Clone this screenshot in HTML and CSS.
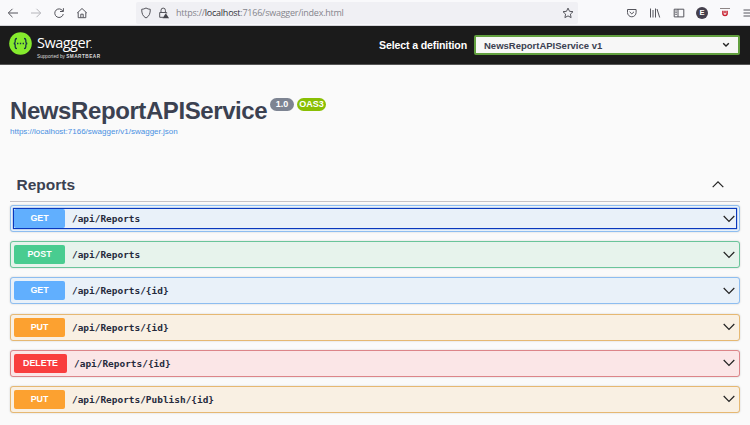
FILE: index.html
```html
<!DOCTYPE html>
<html lang="en">
<head>
<meta charset="utf-8">
<title>Swagger UI</title>
<link rel="stylesheet" href="styles.css">
</head>
<body>
<header class="browser">
  <nav class="nav">
    <svg width="12" height="12" viewBox="0 0 12 12"><path d="M11 6H1.500M5.500 1.800 1.300 6l4.200 4.200"/></svg>
    <svg class="faded" width="12" height="12" viewBox="0 0 12 12"><path d="M1 6h9.500M6.500 1.800 10.700 6l-4.200 4.200"/></svg>
    <svg width="12" height="12" viewBox="0 0 12 12"><path d="M9.900 4.200A4.300 4.300 0 1 0 10.300 7M10.400 1.200v3.300H7"/></svg>
    <svg width="12" height="12" viewBox="0 0 12 12"><path d="M1.200 6 6 1.500 10.800 6M2.200 5.300v5.400h7.600V5.300M4.800 10.500V7.200h2.400v3.300"/></svg>
  </nav>
  <div class="address">
    <svg width="12" height="12" viewBox="0 0 12 12"><path d="M6 1c1.400.9 2.800 1.200 4.300 1.300 0 4-.9 6.900-4.300 8.700C2.600 9.200 1.700 6.300 1.700 2.300 3.200 2.200 4.600 1.900 6 1z"/></svg>
    <svg class="lock" width="12" height="12" viewBox="0 0 12 12"><path d="M5 10.300H1.700V5.500h7v1M3 5.500V3.300a2.200 2.200 0 0 1 4.400 0v2.200"/><path class="solid" d="m7.800 6.200 3.300 5H4.500z"/></svg>
    <span class="url">https://<b>localhost</b>:7166/swagger/index.html</span>
    <svg class="star" width="12" height="12" viewBox="0 0 12 12"><path d="m6 1.100 1.500 3.200 3.500.4-2.600 2.400.7 3.500L6 8.900l-3.100 1.700.7-3.500L1 4.700l3.500-.4z"/></svg>
  </div>
  <div class="tools">
    <svg width="12" height="12" viewBox="0 0 12 12"><path d="M1.500 2.500h8.600v3a4.300 4.300 0 0 1-8.600 0zM3.600 4.800l2.200 2.100L8 4.800"/></svg>
    <svg width="12" height="12" viewBox="0 0 12 12"><path d="M1.500 1.500v9M4 3v7.500M6.500 1.500v9M8 2l2.700 8.500"/></svg>
    <svg width="12" height="12" viewBox="0 0 12 12"><path d="M1.200 2.200h9.600v7.700H1.200zM5 2.200v7.700M2.300 4h1.500M2.300 5.700h1.500M2.300 7.400h1.500"/></svg>
    <span class="avatar">E</span>
    <svg class="ublock" width="12" height="12" viewBox="0 0 12 12"><path class="cap" d="M1 1.500h10"/><path d="M3.900 3.700v3.500Q4.100 8.500 6 8.500t2.100-1.300V3.700M6 3.700v2.600"/></svg>
    <svg width="12" height="12" viewBox="0 0 12 12"><path d="M1.500 3h10M1.500 6h10M1.500 9h10"/></svg>
  </div>
</header>

<div class="topbar">
  <div class="brand">
    <svg class="mark" width="23" height="23" viewBox="0 0 23 23"><circle cx="11.500" cy="11.500" r="11.300"/><path d="M8 6.500c-1.500 0-1.800.5-1.800 1.600v1.500c0 1.200-.4 1.900-1.500 1.900 1.100 0 1.500.7 1.500 1.900v1.500c0 1.100.3 1.600 1.800 1.600M15 6.500c1.500 0 1.800.5 1.800 1.600v1.500c0 1.200.4 1.900 1.500 1.900-1.100 0-1.500.7-1.500 1.900v1.500c0 1.100-.3 1.600-1.800 1.600M8 11.500h1.400M10.800 11.500h1.400M13.600 11.500H15"/></svg>
    <div class="words">
      <div class="name">Swagger<i>.</i></div>
      <div class="by">Supported by <b>SMARTBEAR</b></div>
    </div>
  </div>
  <div class="definition">
    <span class="label">Select a definition</span>
    <div class="select"><span>NewsReportAPIService v1</span><svg width="8" height="6" viewBox="0 0 8 6"><path d="m1.200 1.200 2.800 2.800 2.800-2.800"/></svg></div>
  </div>
</div>

<main>
  <section class="info">
    <h1>NewsReportAPIService</h1>
    <span class="badge">1.0</span>
    <span class="badge oas">OAS3</span>
  </section>
  <a class="spec">https://localhost:7166/swagger/v1/swagger.json</a>
  <section class="tag">
    <h2>Reports</h2>
    <svg width="12" height="8" viewBox="0 0 12 8"><path d="m.7 6.200 5.300-5.300 5.300 5.300"/></svg>
  </section>
  <div class="ops">
    <div class="op get focused"><span class="method">GET</span><span class="path">/api/Reports</span><svg width="12" height="8" viewBox="0 0 12 8"><path d="m.7 1 5.300 5.300 5.300-5.300"/></svg></div>
    <div class="op post"><span class="method">POST</span><span class="path">/api/Reports</span><svg width="12" height="8" viewBox="0 0 12 8"><path d="m.7 1 5.300 5.300 5.300-5.300"/></svg></div>
    <div class="op get"><span class="method">GET</span><span class="path">/api/Reports/{id}</span><svg width="12" height="8" viewBox="0 0 12 8"><path d="m.7 1 5.300 5.300 5.300-5.300"/></svg></div>
    <div class="op put"><span class="method">PUT</span><span class="path">/api/Reports/{id}</span><svg width="12" height="8" viewBox="0 0 12 8"><path d="m.7 1 5.300 5.300 5.300-5.300"/></svg></div>
    <div class="op delete"><span class="method">DELETE</span><span class="path">/api/Reports/{id}</span><svg width="12" height="8" viewBox="0 0 12 8"><path d="m.7 1 5.300 5.300 5.300-5.300"/></svg></div>
    <div class="op put"><span class="method">PUT</span><span class="path">/api/Reports/Publish/{id}</span><svg width="12" height="8" viewBox="0 0 12 8"><path d="m.7 1 5.300 5.300 5.300-5.300"/></svg></div>
  </div>
</main>
</body>
</html>
```
FILE: styles.css
```css
* { box-sizing: border-box; }
body {
  margin: 0;
  width: 750px;
  height: 425px;
  overflow: hidden;
  background: #fafafa;
  color: #3b4151;
  font-family: "Liberation Sans", Arial, sans-serif;
}
svg { flex: none; fill: none; stroke: #55555c; stroke-width: 1; }

.browser {
  display: flex;
  align-items: center;
  height: 26px;
  padding-left: 6.500px;
  background: #f9f9fb;
  border-bottom: 1px solid #d5d5da;
}
.nav { display: flex; flex: none; gap: 11.300px; width: 129.500px; }
.faded { stroke: #b5b5ba; }
.address {
  display: flex;
  flex: none;
  align-items: center;
  width: 442px;
  height: 22px;
  padding: 0 4px;
  border-radius: 2px;
  background: #f0f0f4;
}
.lock { margin-left: 6px; }
.solid { fill: #45454c; stroke: none; }
.url {
  flex: 1;
  margin-left: 6px;
  color: #85858c;
  font-family: "Open Sans", sans-serif;
  font-size: 9px;
  letter-spacing: -0.240px;
  white-space: nowrap;
}
.url b { color: #33333a; font-weight: 400; }
.tools { display: flex; flex: none; align-items: center; gap: 11.300px; margin-left: 48px; }
.avatar {
  width: 12px;
  height: 12px;
  border-radius: 50%;
  background: #45404d;
  color: #fff;
  font-size: 7.500px;
  font-weight: 700;
  line-height: 12px;
  text-align: center;
}
.ublock { stroke: #c8202f; stroke-width: 1.500; }
.cap { stroke: #8d8585; stroke-width: 1; }

.topbar {
  display: flex;
  justify-content: space-between;
  height: 39px;
  padding: 0 10px 0 9px;
  background: #1b1b1b;
  border-bottom: 1px solid #555;
}
.brand { display: flex; padding-top: 6px; }
.mark circle { fill: #85ea2d; stroke: none; }
.mark path { stroke: #173647; stroke-width: 1.300; }
.words { padding-left: 5px; color: #fff; }
.name {
  margin-top: 1px;
  font-family: "Open Sans", sans-serif;
  font-size: 14.500px;
  line-height: 19px;
  letter-spacing: -0.500px;
}
.name i { font-size: 8px; }
.by { color: #ddd; font-size: 4.700px; line-height: 6px; white-space: nowrap; }
.by b { letter-spacing: 0.500px; }
.definition { display: flex; align-items: center; gap: 7px; }
.label { color: #fff; font-size: 10.600px; font-weight: 700; letter-spacing: -0.140px; }
.select {
  display: flex;
  align-items: center;
  justify-content: space-between;
  width: 266px;
  height: 20px;
  padding: 0 8px;
  border: 2px solid #62a03f;
  border-radius: 2px;
  background: #f7f7f7;
  font-size: 9.500px;
  font-weight: 700;
}
.select svg { stroke: #222; stroke-width: 1.400; }

main { padding: 0 10px; }
.info { display: flex; height: 60px; padding-top: 32px; }
h1 {
  margin: 0;
  font-size: 24px;
  line-height: 28px;
  letter-spacing: -0.410px;
  white-space: nowrap;
}
.badge {
  height: 13px;
  margin-left: 3px;
  margin-top: 1px;
  padding: 0 5.500px;
  border-radius: 7px;
  background: #7d8492;
  color: #fff;
  font-size: 9px;
  font-weight: 700;
  line-height: 13.500px;
}
.oas { padding: 0 2.500px; background: #89bf04; }
.spec { display: block; height: 43px; color: #4990e2; font-size: 8px; line-height: 14px; }
.tag {
  display: flex;
  align-items: center;
  justify-content: space-between;
  height: 34px;
  padding: 0 16px 0 6.500px;
  border-bottom: 1px solid #c5c2c7;
}
.tag svg { stroke: #222; stroke-width: 1.200; }
h2 { margin: 0; font-size: 15.500px; line-height: 20px; }
.ops { display: flex; flex-direction: column; gap: 9.200px; padding-top: 3px; }
.op {
  position: relative;
  display: flex;
  align-items: center;
  height: 27px;
  padding: 0 4px 0 3px;
  border: 1px solid;
  border-radius: 3px;
  box-shadow: 0 0 2px rgba(0, 0, 0, 0.190);
}
.op svg { margin-left: auto; stroke: #222; stroke-width: 1.200; }
.method {
  min-width: 51px;
  height: 19px;
  padding: 0 9px;
  border-radius: 2px;
  color: #fff;
  font-size: 8.900px;
  font-weight: 700;
  line-height: 19px;
  text-align: center;
}
.path {
  padding-left: 7px;
  color: #252a3c;
  font-family: "DejaVu Sans Mono", monospace;
  font-size: 9.450px;
  font-weight: 700;
  white-space: nowrap;
}
.get { border-color: #8dbdf0; background: #e9f1f9; }
.get .method { background: #61affe; }
.post { border-color: #6ac49a; background: #e7f3ec; }
.post .method { background: #49cc90; }
.put { border-color: #e6b872; background: #f9f0e3; }
.put .method { background: #fca130; }
.delete { border-color: #dc8589; background: #fbe6e7; }
.delete .method { background: #f93e3e; }
.focused::after {
  content: "";
  position: absolute;
  inset: 2px;
  border: 1px solid #0a38bd;
  box-shadow: 0 0 1px #0a50c8;
}
```
